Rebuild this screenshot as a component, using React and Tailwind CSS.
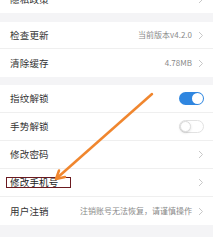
import React from "react";

const Chevron = () => (
  <svg width="6" height="9" viewBox="0 0 6 9" className="shrink-0">
    <path d="M1 1l3.5 3.5L1 8" fill="none" stroke="#c8c8c8" strokeWidth="1" />
  </svg>
);

const Toggle = ({ on }) =>
  on ? (
    <div className="w-[25px] h-[13px] rounded-full bg-[#2f86e0] flex items-center justify-end pr-[1px]">
      <div className="w-[11px] h-[11px] rounded-full bg-white" />
    </div>
  ) : (
    <div className="w-[25px] h-[13px] rounded-full bg-white border border-[#e2e2e2] flex items-center pl-[0px]">
      <div className="w-[11px] h-[11px] rounded-full bg-white border border-[#dcdcdc] shadow-sm" />
    </div>
  );

const Row = ({ label, right, value, border = true, h = "h-[28px]", children }) => (
  <div
    className={`${h} bg-white flex items-center justify-between pl-[10px] pr-[9px] ${
      border ? "border-b border-[#efefef]" : ""
    }`}
  >
    {children || <span className="text-[9.5px] text-[#333] tracking-[0.2px]">{label}</span>}
    <div className="flex items-center gap-[6px]">
      {value && <span className="text-[8px] text-[#8a8a8a]">{value}</span>}
      {right || <Chevron />}
    </div>
  </div>
);

export default function App() {
  return (
    <div
      className="relative w-[213px] h-[237px] overflow-hidden bg-[#f4f4f6]"
      style={{ fontFamily: '"Noto Sans CJK SC", "Noto Sans", sans-serif' }}
    >
      <div className="-mt-[15px]">
        <Row label="隐私政策" border={false} />
      </div>
      <div className="h-[9px]" />
      <Row label="检查更新" value="当前版本v4.2.0" h="h-[27px]" />
      <Row label="清除缓存" value="4.78MB" border={false} />
      <div className="h-[8px]" />
      <Row label="指纹解锁" right={<Toggle on />} />
      <Row label="手势解锁" right={<Toggle />} />
      <Row label="修改密码" />
      <Row>
        <span className="-ml-[4px] inline-block border border-[#6b1a1f] pl-[3px] pr-[11px] leading-[9px] text-[9.5px] text-[#222] tracking-[0.2px]">
          修改手机号
        </span>
      </Row>
      <Row label="用户注销" value="注销账号无法恢复，请谨慎操作" border={false} />

      <svg className="absolute left-0 top-0 pointer-events-none" width="213" height="237">
        <g stroke="#f0862e" strokeWidth="2.5" strokeLinecap="round" fill="none">
          <line x1="152" y1="94" x2="57" y2="178" />
          <polyline points="65,177 56,179 59,170.5" strokeLinejoin="round" />
        </g>
      </svg>
    </div>
  );
}
